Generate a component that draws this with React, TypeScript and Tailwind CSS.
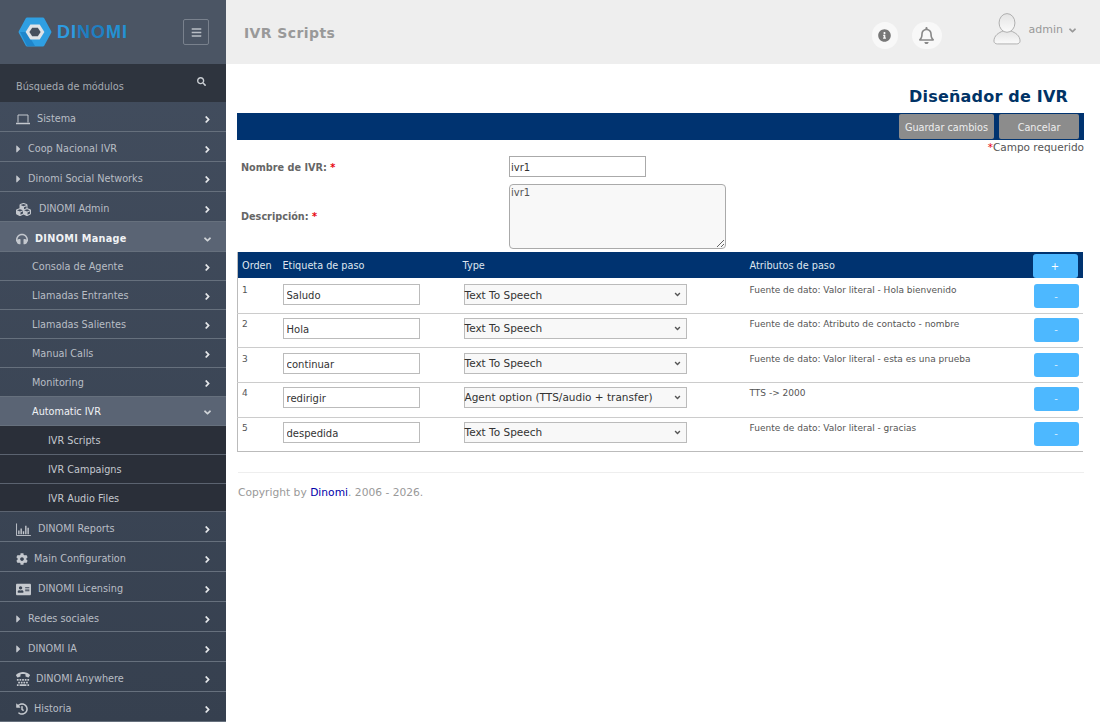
import { FaAddressCard, FaAngleDown, FaAngleRight, FaBars, FaCaretRight, FaCog, FaCubes, FaHeadphones, FaHistory, FaInfoCircle, FaRegBell, FaSearch, FaTty } from 'react-icons/fa';
import { ReactNode } from 'react';

const font = "font-['DejaVu_Sans',Verdana,sans-serif]";

function BarsIcon() {
  return (
    <svg viewBox="0 0 16 14" className="h-[13px] w-[15px]" fill="none">
      <path d="M0.5 0.5V13.500H16" stroke="currentColor" />
      <path d="M3 12V8M5.500 12V6M8 12V9M10.500 12V3M13 12V5" stroke="currentColor" strokeWidth="1.500" />
    </svg>
  );
}

function LaptopIcon() {
  return (
    <svg viewBox="0 0 14 11" className="h-[11px] w-[14px]" fill="none" stroke="currentColor">
      <path d="M2 8.500V1H12V8.500" />
      <path d="M0 9.500H14" strokeWidth="1.500" />
    </svg>
  );
}

function Caret() {
  return <FaCaretRight className="text-[12px] w-[5px]" />;
}

function MenuRow({ icon, label, h = 'h-[30px] pt-[6px]', open, active, indent = 'pl-4', gap = 'gap-[7px]', white, bold }: { icon?: ReactNode; label: string; h?: string; open?: boolean; active?: boolean; indent?: string; gap?: string; white?: boolean; bold?: boolean }) {
  return (
    <div className={`${h} flex items-center ${indent} pr-[13px] border-b border-[#66707d] ${active ? 'bg-[#5a6474]' : ''} ${white ? 'text-[#f0f2f4]' : 'text-[#b9bec5]'}`}>
      <div className={`flex items-center ${gap} flex-1 min-w-0`}>
        {icon && <span className="flex items-center justify-center text-[#c4c8ce]">{icon}</span>}
        <span className={`text-[9.700px] whitespace-nowrap ${bold ? 'font-bold tracking-[0.3px]' : ''}`}>{label}</span>
      </div>
      {open ? <FaAngleDown className="text-[#d0d4d8] text-[11px]" /> : <FaAngleRight className="text-[#e4e6e9] text-[11px]" />}
    </div>
  );
}

function SubRow({ label, h = 'h-[29px] pt-[2px]' }: { label: string; h?: string }) {
  return (
    <div className={`${h} flex items-center pl-12 border-b border-[#5b6370] bg-[#2a2f39] text-[9.700px] text-[#c4c8ce]`}>{label}</div>
  );
}

const steps = [
  { n: 1, tag: 'Saludo', type: 'Text To Speech', attr: 'Fuente de dato: Valor literal - Hola bienvenido', h: 'h-[35px]', pad: 'pt-[6px]' },
  { n: 2, tag: 'Hola', type: 'Text To Speech', attr: 'Fuente de dato: Atributo de contacto - nombre', h: 'h-[34px]', pad: 'pt-[4px]' },
  { n: 3, tag: 'continuar', type: 'Text To Speech', attr: 'Fuente de dato: Valor literal - esta es una prueba', h: 'h-[35px]', pad: 'pt-[5px]' },
  { n: 4, tag: 'redirigir', type: 'Agent option (TTS/audio + transfer)', attr: 'TTS -> 2000', h: 'h-[35px]', pad: 'pt-[4px]' },
  { n: 5, tag: 'despedida', type: 'Text To Speech', attr: 'Fuente de dato: Valor literal - gracias', h: 'h-[34px]', pad: 'pt-[4px]' },
];

export default function App() {
  return (
    <div className={`${font} flex h-[722px] w-[1100px] overflow-hidden bg-white`}>
      <aside className="w-[226px] shrink-0 bg-gradient-to-b from-[#434e5f] to-[#36404f]">
        <div className="h-[64px] bg-[#4b5564] flex items-center pl-[18px] pr-[17px]">
          <svg viewBox="0 0 36 32" className="h-[30px] w-[34px]">
            <path d="M9.500 2H26.500L34 16L26.500 30H9.500L2 16Z" fill="#2f9fe2" stroke="#2f9fe2" strokeWidth="3" strokeLinejoin="round" />
            <path d="M18 31H9.500L2 16H9Z" fill="#1f86cb" />
            <path d="M13 8H23L28 16L23 24H13L8 16Z" fill="#dfe3e8" />
            <path d="M15 11.500H21L24 16L21 20.500H15L12 16Z" fill="#454f5e" />
          </svg>
          <div className="ml-[5px] flex-1 text-[18px] font-bold font-['Liberation_Sans',sans-serif] tracking-[1px]">
            <span className="text-[#2d9be0]">DI</span>
            <span className="text-[#1f7fc2]">NO</span>
            <span className="text-[#2391d2]">MI</span>
          </div>
          <button className="h-[26px] w-[26px] rounded-[2px] border border-[#79818d] flex items-center justify-center text-[#b9bec5] text-[11px]">
            <FaBars />
          </button>
        </div>
        <div className="h-[38px] bg-[#2e343e] flex items-center justify-between pl-4 pr-5 text-[9.700px] text-[#a6abb2]">
          <span className="mt-[8px]">Búsqueda de módulos</span>
          <FaSearch className="text-[9px] text-[#c9cdd2] -mt-[4px]" />
        </div>
        <MenuRow icon={<LaptopIcon />} label="Sistema" />
        <MenuRow icon={<Caret />} label="Coop Nacional IVR" />
        <MenuRow icon={<Caret />} label="Dinomi Social Networks" />
        <MenuRow icon={<FaCubes className="text-[15px]" />} label="DINOMI Admin" gap="gap-[8px]" />
        <MenuRow icon={<FaHeadphones className="text-[12px]" />} label="DINOMI Manage" open active white bold />
        <MenuRow label="Consola de Agente" h="h-[29px] pt-[2px]" indent="pl-8" />
        <MenuRow label="Llamadas Entrantes" h="h-[29px] pt-[2px]" indent="pl-8" />
        <MenuRow label="Llamadas Salientes" h="h-[29px] pt-[2px]" indent="pl-8" />
        <MenuRow label="Manual Calls" h="h-[29px] pt-[2px]" indent="pl-8" />
        <MenuRow label="Monitoring" h="h-[29px] pt-[2px]" indent="pl-8" />
        <MenuRow label="Automatic IVR" h="h-[29px] pt-[2px]" indent="pl-8" open active white />
        <SubRow label="IVR Scripts" />
        <SubRow label="IVR Campaigns" />
        <SubRow label="IVR Audio Files" h="h-[28px] pt-[4px]" />
        <MenuRow icon={<BarsIcon />} label="DINOMI Reports" />
        <MenuRow icon={<FaCog className="text-[12px]" />} label="Main Configuration" gap="gap-[6px]" />
        <MenuRow icon={<FaAddressCard className="text-[15px]" />} label="DINOMI Licensing" />
        <MenuRow icon={<Caret />} label="Redes sociales" />
        <MenuRow icon={<Caret />} label="DINOMI IA" />
        <MenuRow icon={<FaTty className="text-[14px]" />} label="DINOMI Anywhere" gap="gap-[6px]" />
        <MenuRow icon={<FaHistory className="text-[12px]" />} label="Historia" gap="gap-[6px]" />
      </aside>

      <main className="flex-1 min-w-0 flex flex-col">
        <header className="h-[64px] shrink-0 bg-[#eeeeee] flex items-start pl-[18px]">
          <h1 className="mt-[23px] flex-1 text-[14px] font-bold text-[#999999] tracking-[0.4px]">IVR Scripts</h1>
          <div className="mt-[22px] h-[27px] w-[26px] rounded-full bg-[#f8f8f8] flex items-center justify-center text-[#777] text-[13px]">
            <FaInfoCircle />
          </div>
          <div className="mt-[22px] ml-[14px] h-[27px] w-[30px] rounded-full bg-[#f8f8f8] flex items-center justify-center text-[#888] text-[17px]">
            <FaRegBell />
          </div>
          <svg viewBox="0 0 30 34" className="mt-[12px] ml-[51px] h-[34px] w-[28px]">
            <defs>
              <linearGradient id="av" x1="0" y1="0" x2="0" y2="1">
                <stop offset="0" stopColor="#e4e4e4" />
                <stop offset="1" stopColor="#fbfbfb" />
              </linearGradient>
            </defs>
            <path d="M1 30C1 24 6 21 11 19H19C24 21 29 24 29 30C29 32 27 33 25 33H5C3 33 1 32 1 30Z" fill="url(#av)" stroke="#aaaaaa" />
            <ellipse cx="15" cy="10.500" rx="8.500" ry="10" fill="url(#av)" stroke="#aaaaaa" />
          </svg>
          <div className="mt-[22px] ml-[8px] mr-[22px] flex items-center gap-1 text-[11px] text-[#999999]">
            admin <FaAngleDown className="text-[11px]" />
          </div>
        </header>

        <div className="pl-[11px] pr-[16px]">
          <h2 className="mt-[21px] h-[28px] pr-[16px] text-right text-[16px] font-bold text-[#003366] tracking-[0.2px]">Diseñador de IVR</h2>
          <div className="h-[27px] bg-[#003370] flex items-center justify-end gap-[5px] pr-[5px]">
            <button className="h-[25px] w-[95px] rounded-[2px] bg-[#8c8c8c] pt-[3px] text-[9.700px] text-[#eeeeee]">Guardar cambios</button>
            <button className="h-[25px] w-[80px] rounded-[2px] bg-[#8c8c8c] pt-[3px] text-[9.700px] text-[#eeeeee]">Cancelar</button>
          </div>
          <div className="h-[16px] text-right text-[10.500px] text-[#555]"><span className="text-red-600">*</span>Campo requerido</div>

          <div className="flex items-center h-[21px] pl-[4px]">
            <label className="w-[268px] pt-[3px] text-[9.700px] font-bold text-[#666]">Nombre de IVR: <span className="text-red-600">*</span></label>
            <input readOnly value="ivr1" className="h-[21px] w-[137px] border border-[#aaaaaa] px-[1px] pt-[2px] text-[10px] text-[#333] outline-none" />
          </div>
          <div className="flex items-center pl-[4px] mt-[7px]">
            <label className="w-[268px] pt-[2px] text-[9.700px] font-bold text-[#666]">Descripción: <span className="text-red-600">*</span></label>
            <textarea readOnly value="ivr1" className="block h-[65px] w-[217px] rounded-[4px] border border-[#aaaaaa] bg-[#f8f8f8] px-[1px] text-[10px] text-[#555] outline-none" />
          </div>

          <table className="mt-[3px] w-[846px] table-fixed border-collapse border-l border-b border-[#bbbbbb] text-[10px]">
            <colgroup>
              <col className="w-[41px]" />
              <col className="w-[180px]" />
              <col className="w-[287px]" />
              <col className="w-[283px]" />
              <col />
            </colgroup>
            <thead>
              <tr className="h-[26px] bg-[#003370] text-left text-[9.700px] text-[#dfe6ef]">
                <th className="font-normal pl-[4px] pt-[2px]">Orden</th>
                <th className="font-normal pl-[4px] pt-[2px]">Etiqueta de paso</th>
                <th className="font-normal pl-[4px] pt-[2px]">Type</th>
                <th className="font-normal pl-[4px] pt-[2px]">Atributos de paso</th>
                <th className="font-normal pl-[4px] align-bottom">
                  <button className="block h-[24px] w-[45px] rounded-[3px] bg-[#4db8ff] text-[10px] text-white">+</button>
                </th>
              </tr>
            </thead>
            <tbody>
              {steps.map(s => (
                <tr key={s.n} className={`${s.h} border-b border-[#cccccc] last:border-b-0 align-top text-[#555]`}>
                  <td className={`pl-[4px] ${s.pad} text-[9px]`}>{s.n}</td>
                  <td className={`pl-[4px] ${s.pad}`}>
                    <input readOnly value={s.tag} className="block h-[21px] w-[137px] border border-[#bbbbbb] px-[3px] pt-[2px] text-[10px] text-[#333] outline-none" />
                  </td>
                  <td className={`pl-[5px] ${s.pad}`}>
                    <div className="flex h-[21px] w-[223px] items-center justify-between border border-[#bbbbbb] bg-[#f8f8f8] pr-[4px] text-[10.500px] text-[#333]">
                      <span className="pt-[2px]">{s.type}</span>
                      <FaAngleDown className="text-[9px] text-[#555]" />
                    </div>
                  </td>
                  <td className={`pl-[4px] ${s.pad} text-[9px]`}>{s.attr}</td>
                  <td className={`pl-[5px] ${s.pad}`}>
                    <button className="block h-[24px] w-[45px] rounded-[3px] bg-[#4db8ff] text-[#d5eeff]">-</button>
                  </td>
                </tr>
              ))}
            </tbody>
          </table>

          <div className="mt-[20px] ml-[1px] border-t border-[#eeeeee] pt-[12px] text-[10.700px] text-[#999999]">
            Copyright by <span className="text-[#0000aa]">Dinomi</span>. 2006 - 2026.
          </div>
        </div>
      </main>
    </div>
  );
}
